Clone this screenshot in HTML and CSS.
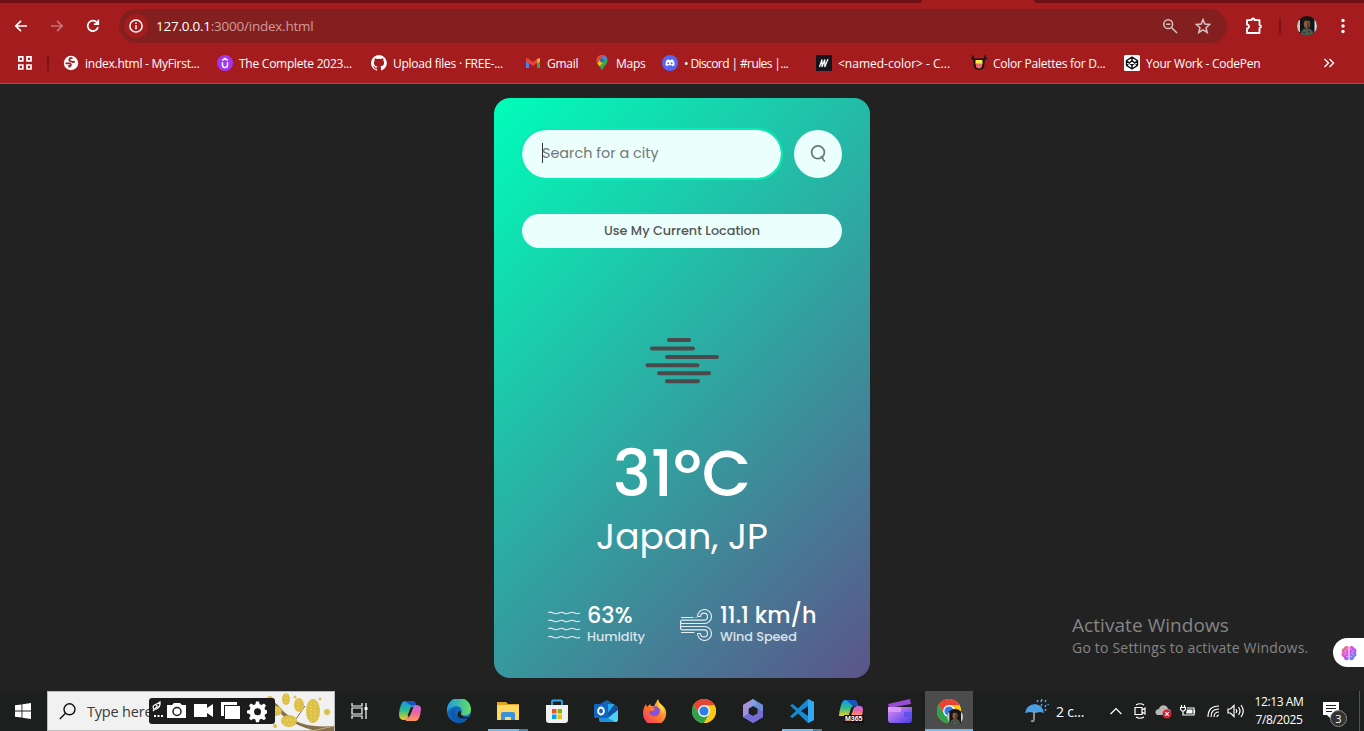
FILE: index.html
```
<!DOCTYPE html>
<html lang="en">
<head>
<meta charset="utf-8">
<title>Weather App</title>
<link rel="stylesheet" href="styles.css">
</head>
<body>
<svg class="defs" width="0" height="0">
  <defs>
    <linearGradient id="cop1" x1="0" y1="0" x2="0" y2="1"><stop offset="0" stop-color="#1694ea"/><stop offset=".5" stop-color="#2fbb8d"/><stop offset="1" stop-color="#f4cf1c"/></linearGradient>
    <linearGradient id="cop2" x1="0" y1="0" x2="0" y2="1"><stop offset="0" stop-color="#b06bea"/><stop offset=".5" stop-color="#ef659f"/><stop offset="1" stop-color="#ff9c59"/></linearGradient>
    <linearGradient id="edgeg" x1="0" y1="0" x2="1" y2="0"><stop offset="0" stop-color="#1b9be2"/><stop offset="1" stop-color="#66df61"/></linearGradient>
    <linearGradient id="ffx" x1="1" y1="0" x2="0" y2="1"><stop offset="0" stop-color="#ffe33e"/><stop offset=".5" stop-color="#ff7b2c"/><stop offset="1" stop-color="#f52c71"/></linearGradient>
    <linearGradient id="hex" x1="0" y1="0" x2="1" y2="1"><stop offset="0" stop-color="#77b8eb"/><stop offset=".5" stop-color="#5b62c8"/><stop offset="1" stop-color="#a67ddc"/></linearGradient>
    <linearGradient id="clip" x1="0" y1="0" x2="1" y2="1"><stop offset="0" stop-color="#df91f5"/><stop offset="1" stop-color="#4a3be4"/></linearGradient>
    <linearGradient id="brain" x1="0" y1="0" x2="1" y2="1"><stop offset="0" stop-color="#ff8a4c"/><stop offset=".45" stop-color="#d94af0"/><stop offset="1" stop-color="#22a6ff"/></linearGradient>
    <symbol id="chrome" viewBox="0 0 24 24">
      <circle cx="12" cy="12" r="12" fill="#fbc914"/>
      <path d="M1.6 6A12 12 0 0 1 22.4 6L12 6.500 7.200 14.700z" fill="#e94335"/>
      <path d="M1.600 6A12 12 0 0 0 12 24L17.200 15 7 14.800z" fill="#2ea14f"/>
      <path d="M12 6.500H22.700A12 12 0 0 1 12 24L17.200 15z" fill="#fbc914"/>
      <circle cx="12" cy="12" r="5.900" fill="#fff"/><circle cx="12" cy="12" r="4.600" fill="#2f7de9"/>
    </symbol>
    <symbol id="face" viewBox="0 0 20 20">
      <clipPath id="fc"><circle cx="10" cy="10" r="10"/></clipPath>
      <g clip-path="url(#fc)"><path d="M0 0h20v20H0z" fill="#141519"/><path d="M0 4h3v12H0z" fill="#cfc6b9"/><path d="M17.500 3H20v14h-2.500z" fill="#d3d8d6"/><ellipse cx="10" cy="8" rx="3.200" ry="4.400" fill="#8a5a3c"/><path d="M6.500 6.500C6 1.800 14 1.800 13.500 6.500L12 4.800H8z" fill="#1b1311"/><path d="M10.500 5q3 2 1.500 7h-2z" fill="#5c3826"/><path d="M3.500 20c0-6 3-7.500 6.500-7.500s6.500 1.500 6.500 7.500z" fill="#4e5b4a"/><path d="M6 16l2 1M11 15l2 1.500" stroke="#22251f"/></g>
    </symbol>
  </defs>
</svg>

<header class="browser">
  <div class="tabstrip"><i class="tab-left"></i><i class="tab-active"></i><i class="tab-right"></i></div>
  <div class="toolbar">
    <svg class="nav-icon" viewBox="0 0 16 16"><path d="M14 8H3M8 2.800L2.800 8 8 13.200"/></svg>
    <svg class="nav-icon faded" viewBox="0 0 16 16"><path d="M2 8h11M8 2.800L13.200 8 8 13.200"/></svg>
    <svg class="nav-icon" viewBox="0 0 16 16"><path d="M13 9A5.200 5.200 0 1 1 11.800 4.400L13 5.800M13.300 1.800V6.200H8.900"/></svg>
    <div class="address">
      <span class="site-info"><svg width="14" height="14" viewBox="0 0 14 14" fill="none" stroke="#fff" stroke-width="1.500"><circle cx="7" cy="7" r="6.100"/><path d="M7 6.200v4M7 3.500v1.400"/></svg></span>
      <span class="url">127.0.0.1<span>:3000/index.html</span></span>
      <svg class="zoom" width="16" height="16" viewBox="0 0 16 16"><circle cx="6.200" cy="6.200" r="4.400"/><path d="M9.500 9.500L15 15M4.200 6.200h4"/></svg>
      <svg class="star" width="16" height="16" viewBox="0 0 16 16"><path d="M8 1.600l1.800 4.500 4.900.4-3.700 3.200 1.200 4.800L8 11.900l-4.200 2.600L5 9.700 1.300 6.500l4.900-.4z"/></svg>
    </div>
    <svg class="puzzle" width="18" height="18" viewBox="0 0 18 18" fill="none" stroke="#fff" stroke-width="1.800" stroke-linejoin="round"><path d="M2 3.200h4.500c0-2.300 3-2.300 3 0h5v5c2 0 2 2.800 0 2.800v5H2v-4.500c2.600 0 2.600-3.800 0-3.800z"/></svg>
    <i class="divider"></i>
    <svg class="avatar" width="20" height="20"><use href="#face"/></svg>
    <svg class="dots" width="4" height="16" fill="#fff"><circle cx="2" cy="2.500" r="1.700"/><circle cx="2" cy="8" r="1.700"/><circle cx="2" cy="13.500" r="1.700"/></svg>
  </div>
  <nav class="bookmarks">
    <span class="apps"><svg width="16" height="16" fill="none" stroke="#fff" stroke-width="1.700"><path d="M1.800 1.800h4v4h-4zM10 1.800h4v4h-4zM1.800 10h4v4h-4zM10 10h4v4h-4z"/></svg></span>
    <span class="sep"></span>
    <a><svg viewBox="0 0 16 16"><circle cx="8" cy="8" r="7.200" fill="#fff"/><path d="M9.500 3.200H7.200Q5.200 5 7.500 6.300t4.300.2M2.500 8.300h3.800q2.500.7 1.200 2.600H6.200v1.500" fill="none" stroke="#a51c1e" stroke-width="1.800"/></svg><span>index.html - MyFirst...</span></a>
    <a><svg viewBox="0 0 16 16"><circle cx="8" cy="8" r="8" fill="#a435f0"/><path d="M5.500 7.200v3c0 3 5 3 5 0v-3M5.200 5.300L8 3.500l2.800 1.800" fill="none" stroke="#fff" stroke-width="1.500"/></svg><span>The Complete 2023...</span></a>
    <a><svg viewBox="0 0 16 16"><path fill="#fff" d="M8 0a8 8 0 0 0-2.500 15.600c.4.100.5-.2.500-.4v-1.400c-2.200.5-2.700-1-2.700-1-.4-.9-.9-1.200-.9-1.200-.7-.5.100-.5.100-.5.800.1 1.200.8 1.200.8.700 1.300 1.900.9 2.300.7.100-.5.300-.9.500-1.100-1.800-.2-3.600-.9-3.600-4 0-.9.300-1.600.8-2.100-.1-.2-.4-1 .1-2.100 0 0 .7-.2 2.200.8a7.600 7.600 0 0 1 4 0c1.500-1 2.200-.8 2.200-.8.400 1.100.2 1.900.1 2.100.5.600.8 1.300.8 2.100 0 3.100-1.900 3.700-3.700 3.900.3.300.6.800.6 1.500v2.200c0 .2.100.5.600.4A8 8 0 0 0 8 0z"/></svg><span>Upload files · FREE-...</span></a>
    <a><svg viewBox="0 0 16 16"><path d="M1 4v9h3V8z" fill="#4285f4"/><path d="M15 4v9h-3V8z" fill="#34a853"/><path d="M1 3.500V6l7 5 4-3V4L8 7 3 3.200z" fill="#ea4335"/><path d="M12 4l3-1v3l-3 2.500z" fill="#fbbc04"/></svg><span>Gmail</span></a>
    <a><svg viewBox="0 0 16 16"><path d="M8 0a5.500 5.500 0 0 0-5.500 5.500C2.500 10 7 11 8 16c1-5 5.500-6 5.500-10.500A5.500 5.500 0 0 0 8 0z" fill="#34a853"/><path d="M2.500 5.500A5.500 5.500 0 0 1 8 0l1.500.3L5 9.500C3.500 8 2.500 7 2.500 5.500z" fill="#ea4335"/><path d="M9 .1a5.500 5.500 0 0 1 4 3.200L7 8z" fill="#4285f4"/><path d="M3.400 8.500L6 5l3 3-3.600 3.200z" fill="#fbbc04"/><circle cx="8" cy="5.500" r="2" fill="#276bc8"/></svg><span>Maps</span></a>
    <a class="tight"><svg viewBox="0 0 16 16"><circle cx="8" cy="8" r="8" fill="#5865f2"/><path d="M5 4.700l1.500-.5.500.8h2l.5-.8 1.500.5c1.200 1.700 1.700 3.500 1.500 5.500l-2 1.100-.7-1H6.200l-.7 1-2-1.100C3.300 8.200 3.800 6.400 5 4.700z" fill="#fff"/><circle cx="6.300" cy="8.300" r="1" fill="#5865f2"/><circle cx="9.700" cy="8.300" r="1" fill="#5865f2"/></svg><span>• Discord | #rules |...</span></a>
    <a class="loose"><svg viewBox="0 0 16 16"><path d="M0 0h16v16H0z" fill="#15141a"/><path d="M3.500 12L6 4.500V12l2.800-7.500V12L12 4" fill="none" stroke="#fff" stroke-width="1.200"/></svg><span>&lt;named-color&gt; - C...</span></a>
    <a><svg viewBox="0 0 16 16"><path d="M2 3.500h12l-1 8.500c-1 4-9 4-10 0z" fill="#17120f"/><path d="M4.500 5h7v4h-7z" fill="#ffec49"/><path d="M4.500 8.500h7l-.5 3c-.8 2.800-5.200 2.800-6 0z" fill="#ef6670"/><path d="M0 3.500h3M13 3.500h3M2 .5v2M14 .5v2" stroke="#17120f" stroke-width="1.500"/></svg><span>Color Palettes for D...</span></a>
    <a><svg viewBox="0 0 16 16"><rect width="16" height="16" rx="1.500" fill="#fff"/><path d="M8 2l5.500 3.700v4.600L8 14l-5.500-3.700V5.700zM8 2v3.700M8 14v-3.700M2.500 5.700L8 10.300l5.500-4.600M2.500 10.300L8 5.700l5.500 4.600" fill="none" stroke="#111" stroke-width="1.400"/></svg><span>Your Work - CodePen</span></a>
    <svg class="more" width="12" height="12" viewBox="0 0 12 12"><path d="M1.500 2l4 4-4 4M6.500 2l4 4-4 4"/></svg>
  </nav>
</header>

<main class="page">
  <section class="card">
    <div class="search">
      <div class="field"><i class="caret"></i><span>Search for a city</span></div>
      <button class="go"><svg width="18" height="20" viewBox="0 0 18 20"><circle cx="9" cy="8.300" r="6.400"/><path d="M11.500 12.500q2 0 2.500 2.500.500 1.500 2 2.500"/></svg></button>
    </div>
    <button class="locate"><span>Use My Current Location</span></button>
    <svg class="mist" width="76" height="48" viewBox="644 337 76 48"><path d="M669 340h20M652 348.500h41M667 357h50M647.500 365.200h50M659 373.300h50M667 381.300h31"/></svg>
    <h1 class="temp">31ºC</h1>
    <h2 class="city">Japan, JP</h2>
    <div class="details">
      <div class="detail humidity">
        <svg width="32" height="32" viewBox="0 0 32 32"><path d="M0 3.500q2.700-1 5.300.5t5.400 0 5.300 0 5.300 0 5.400 0 5.300 0M0 11.500q2.700-1 5.300.5t5.400 0 5.300 0 5.300 0 5.400 0 5.300 0M0 19.500q2.700-1 5.300.5t5.400 0 5.300 0 5.300 0 5.400 0 5.300 0M0 27.800q2.700-1 5.300.5t5.400 0 5.300 0 5.300 0 5.400 0 5.300 0"/></svg>
        <div><p class="value">63%</p><p class="label">Humidity</p></div>
      </div>
      <div class="detail wind">
        <svg width="32" height="32" viewBox="0 0 32 32"><path d="M17.500 7.500A7 7 0 1 1 24.500 14.500H2.200a1.700 1.700 0 0 1 0-3.400H24a3.500 3.500 0 1 0-3.500-3.600zM1 8.500h12.500M15.500 8.500h1M17.500 24.500A7 7 0 1 0 24.500 17.500H2.200a1.700 1.700 0 0 0 0 3.400H24a3.500 3.500 0 1 1-3.500 3.600zM1 23.500h13.500M.6 12.500v7"/></svg>
        <div><p class="value">11.1 km/h</p><p class="label">Wind Speed</p></div>
      </div>
    </div>
  </section>
  <aside class="activate"><p>Activate Windows</p><p class="hint">Go to Settings to activate Windows.</p></aside>
  <div class="assistant"><svg width="16" height="16" viewBox="0 0 16 16"><path fill="url(#brain)" d="M7.500 1.500C5 0 3 1.500 3 3 .5 3.500 0 6 1.200 7.200-.2 9 .5 11.500 2.500 12c0 3 3.500 4 5 2.500zM8.500 1.500C11 0 13 1.500 13 3c2.500.5 3 3 1.800 4.200 1.400 1.800.7 4.300-1.300 4.800 0 3-3.500 4-5 2.500z"/><path d="M3 5.500l2 1v2.500l-2 1M13 5.500l-2 1V9l2 1M5 3.500L7.500 5M11 3.500L8.500 5M5 12l2.500-1M11 12l-2.500-1" fill="none" stroke="#fff" stroke-width=".4"/></svg></div>
</main>

<footer class="taskbar">
  <div class="start"><svg width="16" height="16" fill="#fff"><path d="M0 2.300l6.500-.9v6.100H0zM7.400 1.300L16 0v7.500H7.400zM0 8.400h6.500v6.200L0 13.700zM7.400 8.400H16V16l-8.600-1.200z"/></svg></div>
  <div class="searchbox">
    <svg class="lens" width="17" height="17" viewBox="0 0 17 17"><circle cx="10.500" cy="6.300" r="5.500"/><path d="M6.500 10.300L.8 16"/></svg>
    <span>Type here</span>
    <svg class="branch" width="68" height="39" viewBox="0 0 68 39">
      <path d="M3 6q9 6 15 14l12 9q12 7 38 5v5H51Q40 37 28 31L17 24Q10 15 2 8z" fill="#84704b"/><path d="M46 39l22-5" stroke="#c5b27c"/><path d="M30 27l9-13M24 26l-8 4" stroke="#84704b"/>
      <g fill="#dcc047"><ellipse cx="20" cy="7" rx="4" ry="6"/><ellipse cx="33" cy="13" rx="5" ry="7"/><ellipse cx="47" cy="19" rx="7" ry="12"/><ellipse cx="23" cy="29" rx="8" ry="6"/><ellipse cx="10" cy="19" rx="6" ry="5"/><circle cx="61" cy="20" r="3"/><circle cx="54" cy="7" r="1.500"/><circle cx="9" cy="34" r="2"/><circle cx="29" cy="5" r="1.500"/><circle cx="4" cy="7" r="3"/></g>
      <g fill="none" stroke="#ead36a" stroke-width="1.500" stroke-dasharray="1.500 2"><path d="M20 2v10M32 8v12M45 10v19M49 11v17M17 28h12M6 18h8M18 32h9"/></g>
    </svg>
    <div class="capture">
      <svg width="118" height="26" viewBox="0 0 118 26" fill="#fff"><path d="M5 11.500Q2.500 8 6.500 6.500q3-1 4.500-2.500.500 4-2 6-1 1.500-4 1.500zm-1 1.500l4.500-5M6 6.500q2 0 2.500 3" fill="none" stroke="#fff" stroke-width="1.200"/><path d="M5 17h2v2H5zM8.500 17h2v2h-2zM12 17h2v2h-2zM18 7h5l2-2h6l2 2h4v13H18z"/><circle cx="28" cy="13.500" r="4" fill="none" stroke="#1c1c1c" stroke-width="1.500"/><path d="M45 6h13v4l6-4v13l-6-4v4H45zM72 4h16v3H75v11h-3zM76 8h15v13H76z"/><path d="M107 3.500h3l.6 2.800 2 .8 2.400-1.600 2 2-1.500 2.500.8 1.900 2.700.6v2.800l-2.700.6-.8 2 1.500 2.400-2 2-2.500-1.500-1.900.8-.6 2.700h-3l-.6-2.700-2-.8-2.400 1.500-2-2 1.500-2.400-.8-2-2.700-.6v-2.800l2.700-.6.8-2-1.500-2.400 2-2 2.500 1.600 1.900-.8z"/><circle cx="108.500" cy="13.700" r="3.500" fill="#1c1c1c"/></svg>
    </div>
  </div>
  <div class="apps-row">
    <div class="app"><svg width="17" height="16" fill="none" stroke="#fff" stroke-width="1.200"><path d="M1 0v3h10V0M1 5h10v6H1zM1 16v-3h10v3M15 0v16"/><path d="M13.500 4h3v3h-3z" fill="#fff" stroke="none"/></svg></div>
    <div class="app"><svg width="24" height="24" viewBox="0 0 24 24"><path d="M6 2h9q2 0 3 4l1 2h-4q-2 0-3 3l-2 7q-1 3-4 3-5 0-5-6Q2 4 6 2z" fill="url(#cop1)"/><path d="M6 2h9q2 0 3 4l-4 1-3-2z" fill="#1755c2"/><path d="M18 6q5 0 5 4-1 11-5 12H9q-2 0-2-3h2q2 0 3-3l3-8q1-2 3-2z" fill="url(#cop2)"/><path d="M13 8h2.500l-3.500 8.500H9.500z" fill="#1d1f1e"/></svg></div>
    <div class="app"><svg width="24" height="24" viewBox="0 0 24 24"><circle cx="12" cy="12" r="12" fill="#1368bc"/><path d="M0 11A12 12 0 0 1 24 10.500c0 4-3 6-6 6-4 0-5-1.500-3.500-3.500C16 9 10 5 5 8.500Q1 10 0 14z" fill="url(#edgeg)"/><path d="M14.500 13c-2 3 1 6.500 9 4.500l1 3-3 3c-2-3-7-2-10-4.500-2-3-1-6 1-7z" fill="#1d1f1e"/><path d="M9 10c-3 5 1 11 12 9-4 6-13 7-17 0-3-5 1-9 5-9z" fill="#0c5aae"/></svg></div>
    <div class="app running"><svg width="24" height="24" viewBox="0 0 24 24"><path d="M1 3h9l2 2h11v16H1z" fill="#e1a623"/><path d="M1 6h22v15H1z" fill="#ffd966"/><path d="M5 21v-6q0-2 2-2h10q2 0 2 2v6h-4v-3H9v3z" fill="#3b90dc"/></svg></div>
    <div class="app"><svg width="24" height="24" viewBox="0 0 24 24"><path d="M7 7V2.500q0-1 1-1h8q1 0 1 1V7" fill="none" stroke="#27a9e9" stroke-width="1.800"/><path d="M1 6h22v15q0 3-3 3H4q-3 0-3-3z" fill="#f1f1f1"/><path d="M7 10h4.500v4.500H7z" fill="#f25022"/><path d="M12.500 10H17v4.500h-4.500z" fill="#7fba00"/><path d="M7 15.500h4.500V20H7z" fill="#00a4ef"/><path d="M12.500 15.500H17V20h-4.500z" fill="#ffb900"/></svg></div>
    <div class="app"><svg width="24" height="24" viewBox="0 0 24 24"><path d="M4 6l9-5 11 7v14H8z" fill="#1764b5"/><path d="M9 5h11v12H9z" fill="#2ba8e8"/><path d="M20 6l4 2v3l-9 7-2-3z" fill="#1450a0"/><path d="M9 23l15-12v10q0 2-2 2z" fill="#50d0f4"/><path d="M5 14l16 9H7q-2 0-2-2z" fill="#1c92dc"/><rect y="5" width="14" height="14" rx="1" fill="#0f65bf"/><ellipse cx="7" cy="12" rx="2.900" ry="3.500" fill="none" stroke="#fff" stroke-width="1.900"/></svg></div>
    <div class="app"><svg width="24" height="24" viewBox="0 0 24 24"><path d="M3 5l1 3 3-3 1 2h3l4-7 2 5q7 4 6 10a11.500 11.500 0 0 1-23-.5Q0 9 3 5z" fill="url(#ffx)"/><path d="M9 8c7-3 10 4 6 8-4 3-9 0-9-4l4 0 2-2z" fill="#8850dc"/><path d="M15 3q8 4 5 12-1-5-5-7 1-3 0-5z" fill="#ffda3d"/></svg></div>
    <div class="app"><svg width="24" height="24"><use href="#chrome"/></svg></div>
    <div class="app"><svg width="24" height="24" viewBox="0 0 24 24"><path fill-rule="evenodd" d="M12 0l10 6v12l-10 6-10-6V6zM12 7l-4.500 2.500v5L12 17l4.500-2.500v-5z" fill="url(#hex)"/><path d="M12 0L2 6v12l5.500-3.500v-5l8-4.500z" fill="#a790db"/><path d="M12 0l10 6v6l-5.500-2.500L12 7 7.500 9.500z" fill="#6fa8e4" opacity=".6"/><path d="M2 18l5.500-3.500L12 17l10-5v6l-10 6z" fill="#736ed5"/></svg></div>
    <div class="app running"><svg width="24" height="24" viewBox="0 0 24 24"><path d="M18 0l6 3v18l-6 3L8 14.500 2.500 19 0 17.500 6 12 0 6.500 2.500 5 8 9.500zM18 7l-7 5 7 5z" fill="#168bd5"/><path d="M18 0l6 3v18l-6 3z" fill="#32a9ef"/></svg></div>
    <div class="app m365"><svg width="24" height="24" viewBox="0 0 24 24"><path d="M5 1h10q3 0 4 6h-4q-2 0-3 3l-2 7H0q1-12 5-16z" fill="url(#cop1)"/><path d="M7 1h8q3 0 4 6h-5z" fill="#1755c2"/><path d="M18 7q6-1 6 4l-1 6H11l3-8z" fill="url(#cop2)"/><path d="M12.500 8h2.500l-3 9H9.500z" fill="#1d1f1e"/></svg><b>M365</b></div>
    <div class="app"><svg width="24" height="24" viewBox="0 0 24 24"><path d="M0 5l22-5 1 5L1 9z" fill="#9b49d8"/><path d="M0 8h24v13q0 3-3 3H3q-3 0-3-3z" fill="url(#clip)"/><path d="M0 8h13v5H0z" fill="#e4a2f8" opacity=".7"/><path d="M16 13h8v5h-8z" fill="#6150ef"/></svg></div>
    <div class="app current"><svg width="24" height="24"><use href="#chrome"/></svg><svg class="profile" width="16" height="16"><use href="#face"/></svg></div>
  </div>
  <div class="tray">
    <svg class="umbrella" width="24" height="24" viewBox="0 0 24 24"><path d="M0 14Q1 6 10 5q8 1 9 9l-4-1-5 1-5-1z" fill="#4b9fe6"/><path d="M9 12v8q0 3-3 2" fill="none" stroke="#9a9a9a" stroke-width="1.800"/><path d="M12 3l1-2M16 3l1-3M20 3l1-2M16 7l1-2M20 8l1-2M20 12l1-2M23 6l.5-1" stroke="#4da5ed" stroke-width="1.600"/></svg>
    <span class="weather">2 c...</span>
    <svg class="up" width="12" height="8" viewBox="0 0 12 8"><path d="M.6 7L6 1.500 11.400 7"/></svg>
    <svg class="meet" width="12" height="16" viewBox="0 0 12 16"><path d="M1 4.500h7v7H1zM8 7l3-2v6L8 9M2 2q4-2.500 8 0M2 14q4 2.500 8 0"/></svg>
    <svg class="cloud" width="17" height="15" viewBox="0 0 17 15"><path d="M3 11C-1 10 0 5 4 5c1-5 8-5 9 0 4 0 4 6 0 6z" fill="#b8b8b8"/><circle cx="12" cy="10" r="4.500" fill="#d81f2f"/><path d="M10.200 8.200l3.600 3.600m0-3.600l-3.600 3.600" stroke="#fff" stroke-width="1.200"/></svg>
    <svg class="battery" width="16" height="13" viewBox="0 0 16 13" fill="none" stroke="#fff"><path d="M7 3h7v7H4.500M14.500 5v3M1.500 0v2M4.500 0v2M.5 2.500h5v2L4 6H2L.5 4.500zM3 6v4h2" stroke-width="1.200"/><path d="M7 4.500h5.500v4H6z" fill="#fff" stroke="none"/></svg>
    <svg class="wifi" width="13" height="13" viewBox="0 0 13 13"><path d="M1 12Q1 1 12 1M4 12Q4 4 12 4M7 12q0-5 5-5M10 12q0-2 2-2"/></svg>
    <svg class="sound" width="17" height="14" viewBox="0 0 17 14"><path d="M1 5h2.500L7 1.500v11L3.500 9H1zM9 5q1.500 2 0 4M11.500 3q3 4 0 8M14 1q4.500 6 0 12"/></svg>
    <time class="clock"><span>12:13 AM</span><span>7/8/2025</span></time>
    <div class="notes"><svg width="17" height="17" viewBox="0 0 17 17"><path d="M0 0h16v13H8v4l-4-4H0z" fill="#fff"/><path d="M3 3.500h10M3 6.500h10M3 9.500h6" stroke="#222"/></svg><span class="badge">3</span></div>
    <i class="peek"></i>
  </div>
</footer>
</body>
</html>
```
FILE: styles.css
```
* { box-sizing: border-box; }
body { margin: 0; width: 1364px; height: 731px; overflow: hidden; display: flex; flex-direction: column; background: #222; font-family: "Segoe UI", "Open Sans", "Noto Sans", sans-serif; color: #fff; }
p, h1, h2 { margin: 0; }
svg { display: block; flex: none; }
.defs { position: absolute; }
button { border: 0; padding: 0; font: inherit; }

/* Browser chrome */
.browser { height: 84px; flex: none; background: #a51c1e; border-bottom: 1px solid #b5494a; }
.tabstrip { height: 3px; display: flex; background: #a51c1e; }
.tabstrip i { height: 3px; background: #6f1114; }
.tab-left { width: 922px; border-bottom-right-radius: 3px; }
.tabstrip .tab-active { width: 112px; background: #a51c1e; }
.tab-right { flex: 1; border-bottom-left-radius: 3px; }
.toolbar { height: 46px; display: flex; align-items: center; padding-left: 13px; }
.nav-icon { width: 16px; height: 16px; margin-right: 20px; fill: none; stroke: #fff; stroke-width: 1.7; }
.faded { opacity: .38; }
.toolbar .address { margin-left: -2px; }
.address { width: 1108px; height: 34px; border-radius: 17px; background: #841f20; display: flex; align-items: center; padding-left: 5px; }
.site-info { width: 24px; height: 24px; border-radius: 50%; background: #a51c1e; display: flex; align-items: center; justify-content: center; }
.url { margin-left: 8px; font-size: 13.5px; letter-spacing: -.24px; flex: 1; white-space: nowrap; }
.url span { color: #ce9c9c; }
.zoom, .star { fill: none; stroke: #d7c2c2; stroke-width: 1.5; }
.star { margin: 0 16px 0 17px; }
.puzzle { margin-left: 18px; }
.divider { width: 2px; height: 16px; background: #7b1518; margin-left: 16px; }
.avatar { margin-left: 16px; }
.dots { margin-left: 24px; }
.bookmarks { height: 28px; display: grid; grid-template-columns: 47px 16px 154px 154px 154px 69px 68px 154px 155px 153px 199px 12px; align-items: center; font-size: 12px; }
.apps { padding-left: 17px; }
.sep { width: 2px; height: 16px; background: #7b1518; }
.bookmarks a { display: flex; align-items: center; gap: 6px; white-space: nowrap; letter-spacing: -.25px; }
.bookmarks a.tight { letter-spacing: -.6px; }
.bookmarks a.loose { letter-spacing: 0; }
.bookmarks a svg { width: 16px; height: 16px; }
.more { fill: none; stroke: #fff; stroke-width: 1.4; }

/* Weather card */
.page { height: 607px; flex: none; position: relative; padding-top: 14px; }
.card { width: 376px; height: 580px; margin: 0 auto; padding: 32px 28px; border-radius: 16px; background: linear-gradient(135deg, #00feba, #5b548a); display: flex; flex-direction: column; align-items: center; font-family: Poppins, sans-serif; }
.search { width: 320px; display: flex; justify-content: space-between; }
.field { width: 259px; height: 48px; border-radius: 24px; background: #ebfffc; color: #757575; outline: 2px solid #0ceab3; display: flex; align-items: center; padding: 0 0 2px 20px; font-size: 14.4px; }
.caret { width: 1px; height: 20px; background: #333; margin-right: -1px; }
.go { width: 48px; height: 48px; border-radius: 50%; background: #ebfffc; display: flex; align-items: center; justify-content: center; }
.go svg { fill: none; stroke: #6d7776; stroke-width: 1.7; }
.locate { width: 320px; height: 34px; margin-top: 36px; border-radius: 17px; background: #ebfffc; color: #555; font-size: 12.8px; font-weight: 500; }
.mist { margin-top: 89px; fill: none; stroke: #4c494d; stroke-width: 4; stroke-linecap: round; }
.temp { margin-top: 50px; line-height: 78px; font-size: 64px; font-weight: 500; }
.city { line-height: 48px; font-size: 36px; font-weight: 400; }
.details { width: 320px; display: flex; padding-left: 26px; margin-top: 42px; }
.detail { display: flex; align-items: center; gap: 8px; }
.humidity { width: 132px; gap: 7px; }
.detail svg { fill: none; stroke: #e4eef3; stroke-width: 1.1; }
.value { line-height: 25px; font-size: 22.4px; font-weight: 500; white-space: nowrap; }
.label { line-height: 18px; font-size: 12.8px; color: #d9e4eb; font-weight: 500; letter-spacing: -.05px; white-space: nowrap; }
.activate { position: absolute; left: 1072px; top: 528px; color: #858585; white-space: nowrap; }
.activate p { font-size: 19px; line-height: 26px; letter-spacing: .06px; }
.activate .hint { font-size: 14px; line-height: 19px; letter-spacing: .2px; }
.assistant { position: absolute; right: 0; top: 554px; width: 31px; height: 29px; background: #fff; border-radius: 15px 0 0 15px; display: flex; align-items: center; padding-left: 8px; }

/* Taskbar */
.taskbar { height: 40px; flex: none; background: #1d1f1e; display: flex; }
.start { width: 47px; display: flex; align-items: center; padding-left: 15px; }
.searchbox { width: 288px; background: #f1f1f1; border: 1px solid #bbb; color: #3a3a3a; position: relative; display: flex; align-items: center; padding-left: 11px; }
.searchbox span { margin-left: 11px; font-size: 14.5px; letter-spacing: -.2px; white-space: nowrap; }
.lens { fill: none; stroke: #111; stroke-width: 1.4; }
.branch { position: absolute; right: 0; top: 0; }
.capture { position: absolute; left: 101px; top: 6px; width: 126px; height: 26px; border-radius: 3px; background: #1c1c1c; }
.apps-row { display: flex; gap: 1px; }
.app { width: 48px; height: 40px; display: flex; align-items: center; justify-content: center; position: relative; }
.app:first-child { margin-right: 2px; }
.running::after { content: ""; position: absolute; left: 4px; bottom: 0; width: 40px; height: 2px; background: linear-gradient(90deg, #76b9ed 31px, #517e9f 31px); }
.current::after { content: ""; position: absolute; left: 0; bottom: 0; width: 48px; height: 2px; background: #76b9ed; }
.current { background: #4c4c4c; }
.profile { position: absolute; right: 10px; bottom: 6px; }
.m365 b { position: absolute; left: 17px; top: 24px; padding: 0 1px; background: #111; font: bold 7px/8px "Liberation Sans", sans-serif; }
.tray { flex: 1; display: flex; align-items: center; padding-left: 52px; }
.weather { width: 44px; margin-left: 7px; font-size: 14px; letter-spacing: -.2px; }
.up, .meet, .wifi, .sound { fill: none; stroke: #fff; stroke-width: 1.2; }
.up { margin-left: 10px; }
.meet { margin-left: 12px; }
.cloud { margin-left: 9px; }
.battery { margin-left: 8px; }
.wifi { margin-left: 11px; }
.sound { margin-left: 7px; }
.clock { width: 64px; margin-left: 3px; font-size: 12px; line-height: 18px; letter-spacing: -.4px; text-align: center; display: flex; flex-direction: column; white-space: nowrap; }
.notes { position: relative; margin: -2px 0 0 12px; }
.badge { position: absolute; left: 7px; top: 8px; width: 17px; height: 17px; border-radius: 50%; background: #333; border: 1px solid #888; font-size: 11px; line-height: 15px; text-align: center; }
.peek { width: 1px; height: 40px; margin-left: 19px; background: #555; }
```
